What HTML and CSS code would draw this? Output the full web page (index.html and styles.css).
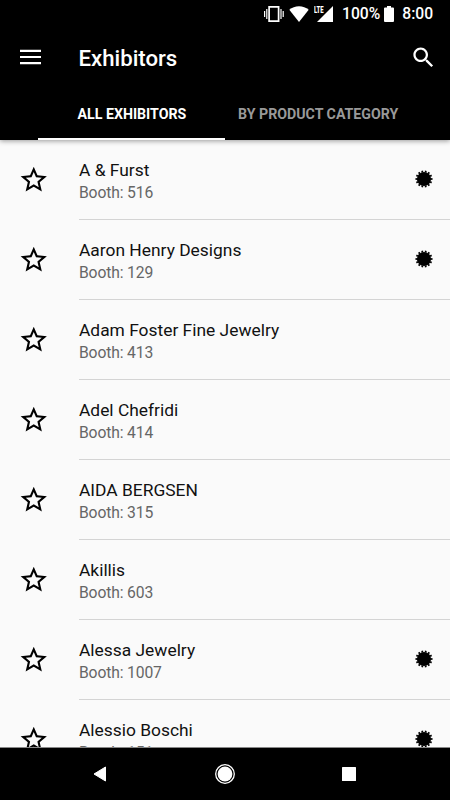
FILE: index.html
```html
<!DOCTYPE html>
<html lang="en">
<head>
  <meta charset="utf-8">
  <title>Exhibitors</title>
  <link rel="stylesheet" href="styles.css">
</head>
<body>
  <svg class="defs">
    <symbol id="star" viewBox="0 0 24 24">
      <path d="M22 9.24l-7.19-.62L12 2 9.19 8.63 2 9.24l5.46 4.73L5.82 21 12 17.27 18.18 21l-1.63-7.03L22 9.24zM12 15.4l-3.76 2.27 1-4.28-3.32-2.88 4.38-.38L12 6.1l1.71 4.04 4.38.38-3.32 2.88 1 4.28L12 15.4z"/>
    </symbol>
    <symbol id="seal" viewBox="0 0 18 18">
      <circle cx="9" cy="9" r="7.1"/>
      <circle cx="9" cy="9" r="7.6" fill="none" stroke="#000" stroke-width="1.8" pathLength="28" stroke-dasharray="1 1" stroke-dashoffset="0.5"/>
    </symbol>
  </svg>

  <header class="header">
    <div class="status-bar">
      <svg class="vibrate" width="20" height="18" viewBox="0 0 20 18">
        <path d="M5.1 1.8h9.5v14.4H5.1z" fill="none" stroke="#fff" stroke-width="1.7"/>
        <path d="M.6 6v6M2.8 4v10M17 4v10M19.2 6v6" stroke="#fff" stroke-width="1.2"/>
      </svg>
      <svg class="wifi" width="20" height="16" viewBox="0 0 20 16">
        <path d="M10 16L.3 3.7C3 1.5 6.3.3 10 .3s7 1.2 9.7 3.4z" fill="#fff"/>
      </svg>
      <div class="signal">
        <span class="lte">LTE</span>
        <svg width="16" height="16" viewBox="0 0 16 16">
          <path d="M16 0v16H0z" fill="#fff"/>
        </svg>
      </div>
      <span class="percent">100%</span>
      <svg class="battery" width="10" height="16" viewBox="0 0 10 16">
        <path d="M3 0h4v1.6h2q1 0 1 1V15q0 1-1 1H1q-1 0-1-1V2.6q0-1 1-1h2z" fill="#fff"/>
      </svg>
      <span class="clock">8:00</span>
    </div>

    <div class="toolbar">
      <svg class="menu-icon" width="21" height="16" viewBox="0 0 21 16">
        <path d="M0 1.8h21M0 8h21M0 14.2h21" stroke="#fff" stroke-width="2.2"/>
      </svg>
      <h1>Exhibitors</h1>
      <svg class="search-icon" width="27" height="27" viewBox="0 0 24 24">
        <path fill="#fff" d="M15.5 14h-.79l-.28-.27C15.41 12.59 16 11.11 16 9.5 16 5.91 13.09 3 9.5 3S3 5.91 3 9.5 5.91 16 9.5 16c1.61 0 3.09-.59 4.23-1.57l.27.28v.79l5 4.99L20.49 19l-4.99-5zm-6 0C7.01 14 5 11.99 5 9.5S7.01 5 9.5 5 14 7.01 14 9.5 11.99 14 9.5 14z"/>
      </svg>
    </div>

    <nav class="tabs">
      <div class="tab active">ALL EXHIBITORS</div>
      <div class="tab">BY PRODUCT CATEGORY</div>
    </nav>
  </header>

  <main class="list">
    <div class="item">
      <svg class="star"><use href="#star"/></svg>
      <div class="info">
        <div class="name">A &amp; Furst</div>
        <div class="booth">Booth: 516</div>
        <svg class="seal"><use href="#seal"/></svg>
      </div>
    </div>
    <div class="item">
      <svg class="star"><use href="#star"/></svg>
      <div class="info">
        <div class="name">Aaron Henry Designs</div>
        <div class="booth">Booth: 129</div>
        <svg class="seal"><use href="#seal"/></svg>
      </div>
    </div>
    <div class="item">
      <svg class="star"><use href="#star"/></svg>
      <div class="info">
        <div class="name">Adam Foster Fine Jewelry</div>
        <div class="booth">Booth: 413</div>
      </div>
    </div>
    <div class="item">
      <svg class="star"><use href="#star"/></svg>
      <div class="info">
        <div class="name">Adel Chefridi</div>
        <div class="booth">Booth: 414</div>
      </div>
    </div>
    <div class="item">
      <svg class="star"><use href="#star"/></svg>
      <div class="info">
        <div class="name">AIDA BERGSEN</div>
        <div class="booth">Booth: 315</div>
      </div>
    </div>
    <div class="item">
      <svg class="star"><use href="#star"/></svg>
      <div class="info">
        <div class="name">Akillis</div>
        <div class="booth">Booth: 603</div>
      </div>
    </div>
    <div class="item">
      <svg class="star"><use href="#star"/></svg>
      <div class="info">
        <div class="name">Alessa Jewelry</div>
        <div class="booth">Booth: 1007</div>
        <svg class="seal"><use href="#seal"/></svg>
      </div>
    </div>
    <div class="item">
      <svg class="star"><use href="#star"/></svg>
      <div class="info">
        <div class="name">Alessio Boschi</div>
        <div class="booth">Booth: 151</div>
        <svg class="seal"><use href="#seal"/></svg>
      </div>
    </div>
  </main>

  <footer class="nav-bar">
    <svg width="14" height="16" viewBox="0 0 14 16">
      <path d="M12.5 1v14L1 8z" fill="#fff" stroke="#fff" stroke-linejoin="round"/>
    </svg>
    <svg width="20" height="20" viewBox="0 0 20 20">
      <circle cx="10" cy="10" r="9.3" fill="none" stroke="#fff" stroke-width="1.3"/>
      <circle cx="10" cy="10" r="7.4" fill="#fff"/>
    </svg>
    <svg width="14" height="14" viewBox="0 0 14 14">
      <rect width="14" height="14" rx="0.5" fill="#fff"/>
    </svg>
  </footer>
</body>
</html>
```

FILE: styles.css
```css
* {
  box-sizing: border-box;
}

body {
  margin: 0;
  height: 800px;
  display: flex;
  flex-direction: column;
  overflow: hidden;
  background-color: #fafafa;
  font-family: Roboto, "Liberation Sans", sans-serif;
}

svg {
  display: block;
  flex-shrink: 0;
}

.defs {
  position: absolute;
  width: 0;
  height: 0;
}

.header {
  position: relative;
  z-index: 1;
  height: 140px;
  flex-shrink: 0;
  background-color: #000;
  color: #fff;
  box-shadow: 0 1px 5px rgba(0, 0, 0, 0.4);
}

.status-bar {
  display: flex;
  align-items: center;
  height: 27px;
  padding-left: 264px;
  font-size: 15.7px;
  font-weight: 500;
  line-height: 27px;
}

.wifi {
  margin-left: 5px;
}

.signal {
  position: relative;
  margin-left: 8px;
}

.lte {
  position: absolute;
  left: -3.5px;
  top: -0.5px;
  font-size: 9.5px;
  font-weight: 900;
  line-height: 9px;
  transform: scaleX(0.62);
  transform-origin: left;
}

.percent {
  margin-left: 9px;
}

.battery {
  margin-left: 4px;
}

.clock {
  margin-left: 8px;
}

.toolbar {
  display: flex;
  align-items: center;
  height: 60px;
  padding: 0 13px 0 20px;
}

.toolbar h1 {
  flex: 1;
  margin: 1px 0 0 37.5px;
  font-size: 22.2px;
  font-weight: 500;
  line-height: 30px;
}

.tabs {
  display: flex;
  height: 53px;
  padding-left: 38px;
}

.tab {
  padding-right: 13px;
  padding-left: 13px;
  color: #999;
  font-size: 14.2px;
  font-weight: 700;
  line-height: 55px;
  white-space: nowrap;
}

.tab.active {
  width: 187px;
  padding-left: 39.5px;
  border-bottom: 2px solid #fff;
  color: #fff;
}

.list {
  flex: 1;
  min-height: 0;
  overflow: hidden;
}

.item {
  display: flex;
  height: 80px;
  padding-left: 18px;
}

.star {
  width: 31.5px;
  height: 31.5px;
  margin-top: 23.5px;
}

.info {
  display: grid;
  flex: 1;
  grid-template-columns: 1fr 18px;
  grid-template-rows: 23px 22px;
  align-content: start;
  margin-left: 29.5px;
  padding: 19px 17px 0 0;
  border-bottom: 1px solid #d4d4d4;
}

.name {
  grid-column: 1;
  color: #111;
  font-size: 17.4px;
  line-height: 22px;
}

.booth {
  grid-column: 1;
  color: #666;
  font-size: 15.7px;
  line-height: 22px;
  letter-spacing: -0.15px;
}

.seal {
  grid-column: 2;
  grid-row: 1 / 3;
  width: 18px;
  height: 18px;
  margin-top: 11px;
}

.nav-bar {
  display: flex;
  align-items: center;
  gap: 107.5px;
  height: 53px;
  flex-shrink: 0;
  padding-left: 93px;
  border-top: 1px solid #888;
  background-color: #000;
}
```
